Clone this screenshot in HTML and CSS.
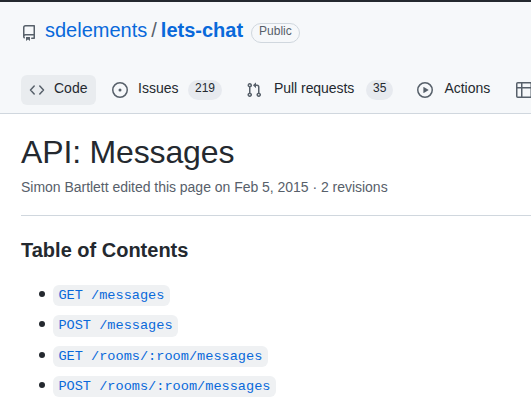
FILE: index.html
```html
<!DOCTYPE html>
<html lang="en">
<head>
<meta charset="utf-8">
<title>API: Messages</title>
<link rel="stylesheet" href="styles.css">
</head>
<body>
<header class="repo-header">
  <div class="repo-title">
    <svg class="icon repo-icon" viewBox="0 0 16 16"><path fill-rule="evenodd" d="M2 2.5A2.5 2.5 0 0 1 4.500 0h8.750a.75.75 0 0 1 .75.75v12.500a.75.75 0 0 1-.75.75h-2.500a.75.75 0 1 1 0-1.500h1.750v-2h-8a1 1 0 0 0-.714 1.700.75.75 0 0 1-1.072 1.050A2.495 2.495 0 0 1 2 11.500v-9zm10.500-1V9h-8c-.356 0-.694.074-1 .208V2.500a1 1 0 0 1 1-1h8zM5 12.250v3.250a.25.25 0 0 0 .4.200l1.450-1.087a.25.25 0 0 1 .3 0L8.600 15.700a.25.25 0 0 0 .4-.2v-3.250a.25.25 0 0 0-.25-.25h-3.500a.25.25 0 0 0-.25.25z"/></svg>
    <a class="owner" href="#">sdelements</a>
    <span class="slash">/</span>
    <a class="repo" href="#">lets-chat</a>
    <span class="visibility">Public</span>
  </div>
  <nav class="tabs">
    <a class="tab selected" href="#">
      <svg class="icon" viewBox="0 0 16 16"><path d="m5.200 4-3.700 4 3.700 4M10.800 4l3.700 4-3.700 4" fill="none" stroke="currentColor" stroke-width="1.500" stroke-linecap="round" stroke-linejoin="round"/></svg>
      <span class="label code-label">Code</span>
    </a>
    <a class="tab" href="#">
      <svg class="icon" viewBox="0 0 16 16"><circle cx="8" cy="8" r="7.250" fill="none" stroke="currentColor" stroke-width="1.500"/><circle cx="8" cy="8" r="1.500"/></svg>
      <span class="label issues-label">Issues</span>
      <span class="count">219</span>
    </a>
    <a class="tab" href="#">
      <svg class="icon" viewBox="0 0 16 16"><path fill-rule="evenodd" d="M7.177 3.073 9.573.677A.25.25 0 0 1 10 .854v4.792a.25.25 0 0 1-.427.177L7.177 3.427a.25.25 0 0 1 0-.354zM3.750 2.500a.75.75 0 1 0 0 1.500.75.75 0 0 0 0-1.500zm-2.250.75a2.250 2.250 0 1 1 3 2.122v5.256a2.251 2.251 0 1 1-1.500 0V5.372A2.250 2.250 0 0 1 1.500 3.250zM11 2.500h-1V4h1a1 1 0 0 1 1 1v5.628a2.251 2.251 0 1 0 1.500 0V5A2.500 2.500 0 0 0 11 2.500zm1 10.250a.75.75 0 1 1 1.500 0 .75.75 0 0 1-1.500 0zM3.750 12a.75.75 0 1 0 0 1.500.75.75 0 0 0 0-1.500z"/></svg>
      <span class="label pulls-label">Pull requests</span>
      <span class="count">35</span>
    </a>
    <a class="tab" href="#">
      <svg class="icon" viewBox="0 0 16 16"><circle cx="8" cy="8" r="7.250" fill="none" stroke="currentColor" stroke-width="1.500"/><path d="M6.380 5.220v5.560a.25.25 0 0 0 .38.210l4.600-2.780a.25.25 0 0 0 0-.42l-4.600-2.780a.25.25 0 0 0-.38.210z"/></svg>
      <span class="label actions-label">Actions</span>
    </a>
    <a class="tab projects" href="#">
      <svg class="icon" viewBox="0 0 16 16"><g fill="none" stroke="currentColor" stroke-width="1.500"><rect x=".75" y=".75" width="14.500" height="14.500" rx="1"/><path d="M.75 5.750h14.500M5.750.75v14.500"/></g></svg>
    </a>
  </nav>
</header>
<main class="wiki">
  <h1>API: Messages</h1>
  <p class="meta">Simon Bartlett edited this page on Feb 5, 2015 · 2 revisions</p>
  <h3>Table of Contents</h3>
  <ul class="toc">
    <li><a href="#"><code>GET /messages</code></a></li>
    <li><a href="#"><code>POST /messages</code></a></li>
    <li><a href="#"><code>GET /rooms/:room/messages</code></a></li>
    <li><a href="#"><code>POST /rooms/:room/messages</code></a></li>
  </ul>
</main>
</body>
</html>
```
FILE: styles.css
```css
* { box-sizing: border-box; }
html { overflow: hidden; }
body {
  margin: 0;
  background: #fff;
  color: #24292f;
  font: 14px/20px "Liberation Sans", Arial, sans-serif;
  overflow: hidden;
}
a { color: #0969da; text-decoration: none; }
.icon {
  width: 16px;
  height: 16px;
  flex: none;
  fill: currentColor;
  color: #57606a;
}
.repo-header {
  height: 114px;
  padding-left: 21px;
  background: #f6f8fa;
  border-top: 2px solid #24292f;
  border-bottom: 1px solid #d0d7de;
  overflow: hidden;
}
.repo-title {
  display: flex;
  height: 56px;
  align-items: center;
  font-size: 20px;
  white-space: nowrap;
}
.repo-icon { margin: 5px 8px 0 0; }
.slash { margin: 0 4px; color: #57606a; }
.repo { font-weight: 700; }
.visibility {
  margin: 5px 0 0 8px;
  height: 20px;
  padding: 0 7px;
  border: 1px solid #d0d7de;
  border-radius: 10px;
  color: #57606a;
  font-size: 12px;
  line-height: 15px;
}
.tabs {
  display: flex;
  gap: 8px;
  margin-top: 17px;
}
.tab {
  display: flex;
  flex: none;
  align-items: center;
  height: 30px;
  padding: 0 8px;
  border-radius: 6px;
  color: #24292f;
  white-space: nowrap;
}
.selected { background: #e9ecef; }
.projects { width: 23px; padding-right: 0; }
.label { margin: -4px 0 0 9px; }
.code-label { width: 34px; }
.issues-label { width: 41px; margin-left: 10px; }
.pulls-label { width: 83px; margin-left: 12px; letter-spacing: -0.05px; }
.actions-label { width: 47px; margin-left: 11px; margin-right: 1px; }
.count {
  height: 20px;
  margin-left: 9px;
  padding: 0 7px;
  border-radius: 10px;
  background: #e7eaef;
  font-size: 12px;
  line-height: 16px;
}
.wiki { padding-left: 21px; }
h1 {
  margin: 18px 0 0;
  font-size: 32px;
  line-height: 40px;
  font-weight: 400;
  letter-spacing: -0.15px;
}
.meta {
  margin: 5px 0 0;
  height: 39px;
  border-bottom: 1px solid #d0d7de;
  color: #57606a;
  letter-spacing: -0.025px;
}
h3 {
  margin: 22px 0 0;
  font-size: 20px;
  line-height: 25px;
}
.toc {
  display: grid;
  row-gap: 6.400px;
  margin: 19px 0 0;
  padding-left: 18px;
  list-style: none;
  font-size: 16px;
  line-height: 24px;
}
.toc li {
  display: flex;
  align-items: baseline;
}
.toc li::before {
  content: "";
  width: 6px;
  height: 6px;
  margin-right: 8px;
  border-radius: 50%;
  background: #24292f;
  align-self: center;
}
code {
  padding: 3.200px 5.400px;
  border-radius: 6px;
  background: #eff1f3;
  font: 13.600px "Liberation Mono", monospace;
}
```
